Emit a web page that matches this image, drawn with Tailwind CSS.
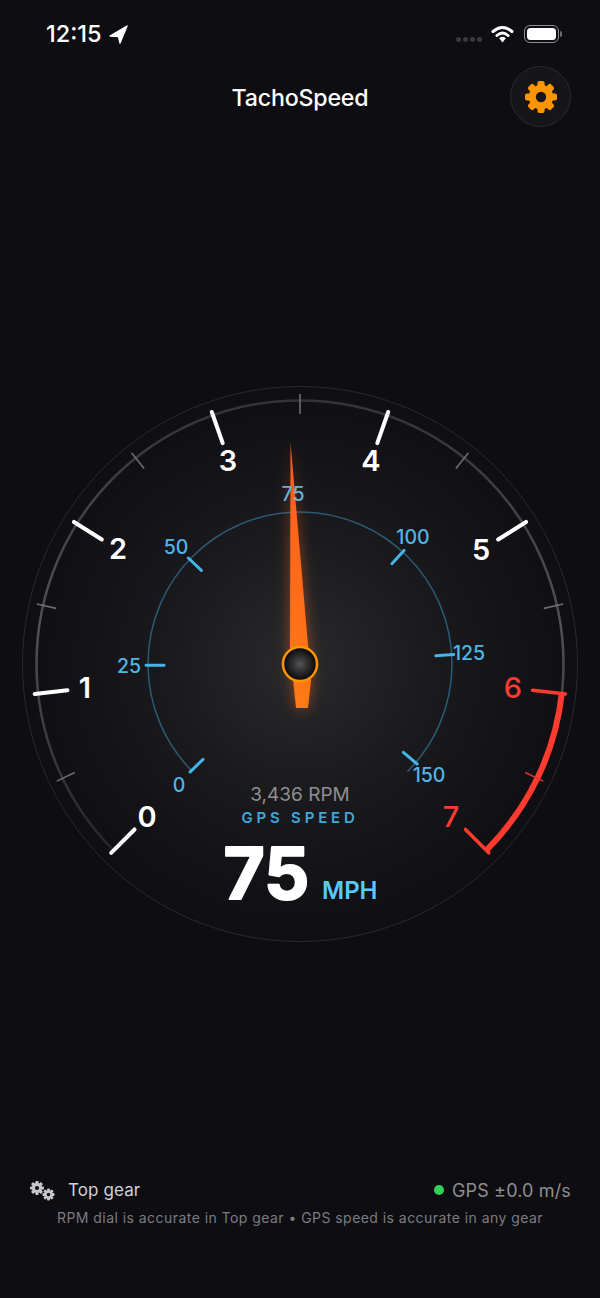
<!DOCTYPE html>
<html lang="en">
<head>
    <meta charset="UTF-8">
    <meta name="viewport" content="width=device-width, initial-scale=1.0">
    <title>TachoSpeed</title>
    <script src="https://cdn.jsdelivr.net/npm/@tailwindcss/browser@4"></script>
</head>
<body class="bg-[#0d0d12]">
    <div class="flex flex-col h-[1298px] w-[600px] overflow-hidden font-[Inter,sans-serif] text-white">

        <!-- status bar -->
        <div class="flex justify-between items-start h-[66px] pl-[46px] pr-[38px] pt-[20px]">
            <div class="flex items-center gap-[7px]">
                <span class="text-[23.5px] leading-[28px] font-medium">12:15</span>
                <svg width="19" height="19" viewBox="0 0 19 19"><path d="M18 1 L1 11 L9.5 11.5 L11 18 Z" class="fill-white stroke-white stroke-[1.4]" stroke-linejoin="round"/></svg>
            </div>
            <div class="flex items-start gap-[9px] pt-[5px]">
                <div class="flex gap-[2px] pt-[12px]">
                    <span class="w-[5px] h-[5px] rounded-full bg-[#3a3a3c]"></span>
                    <span class="w-[5px] h-[5px] rounded-full bg-[#3a3a3c]"></span>
                    <span class="w-[5px] h-[5px] rounded-full bg-[#3a3a3c]"></span>
                    <span class="w-[5px] h-[5px] rounded-full bg-[#3a3a3c]"></span>
                </div>
                <svg width="23" height="18" viewBox="0 0 23 18" class="mr-[1px]">
                    <path d="M2 6.5 Q11.5 -1.5 21 6.5" class="fill-none stroke-white stroke-[3]" stroke-linecap="round"/>
                    <path d="M6 10.5 Q11.5 5.5 17 10.5" class="fill-none stroke-white stroke-[3]" stroke-linecap="round"/>
                    <path d="M8.2 13.2 Q11.5 10.4 14.8 13.2 L11.5 17.6 Z" class="fill-white"/>
                </svg>
                <div class="flex items-center">
                    <div class="w-[35px] h-[18px] rounded-[6px] border border-[#8e8e93] p-[2px]">
                        <div class="w-full h-full rounded-[3.5px] bg-white"></div>
                    </div>
                    <div class="w-[2px] h-[6px] ml-[1px] rounded-r-sm bg-[#6e6e73]"></div>
                </div>
            </div>
        </div>

        <!-- title row -->
        <div class="grid grid-cols-[1fr_auto_1fr] items-center h-[61px] px-[29px]">
            <div></div>
            <h1 class="mt-[3px] text-[23.2px] font-medium tracking-[-0.2px]">TachoSpeed</h1>
            <div class="flex justify-end">
                <button class="flex items-center justify-center w-[61px] h-[61px] rounded-full bg-[#16161a] border border-[#2a2a2e]">
                    <svg width="34" height="34" viewBox="-17 -17 34 34" class="fill-[#ff9500] stroke-[#ff9500]">
                        <circle r="8.7" fill="none" stroke-width="7"/>
                        <g stroke="none">
                            <rect x="-3.6" y="-16" width="7.2" height="8" rx="2"/>
                            <rect x="-3.6" y="-16" width="7.2" height="8" rx="2" transform="rotate(45)"/>
                            <rect x="-3.6" y="-16" width="7.2" height="8" rx="2" transform="rotate(90)"/>
                            <rect x="-3.6" y="-16" width="7.2" height="8" rx="2" transform="rotate(135)"/>
                            <rect x="-3.6" y="-16" width="7.2" height="8" rx="2" transform="rotate(180)"/>
                            <rect x="-3.6" y="-16" width="7.2" height="8" rx="2" transform="rotate(225)"/>
                            <rect x="-3.6" y="-16" width="7.2" height="8" rx="2" transform="rotate(270)"/>
                            <rect x="-3.6" y="-16" width="7.2" height="8" rx="2" transform="rotate(315)"/>
                        </g>
                    </svg>
                </button>
            </div>
        </div>

        <!-- dial, coordinates in the viewBox are page pixels -->
        <svg width="600" height="566" viewBox="0 380 600 566" class="mt-[253px] shrink-0">
            <defs>
                <radialGradient id="dialBg" cx="300" cy="664" r="278" gradientUnits="userSpaceOnUse">
                    <stop offset="0" stop-color="#2a2a2c"/>
                    <stop offset="0.45" stop-color="#1b1b1e"/>
                    <stop offset="1" stop-color="#0e0e13"/>
                </radialGradient>
                <linearGradient id="ringStroke" x1="0" y1="400" x2="0" y2="852" gradientUnits="userSpaceOnUse">
                    <stop offset="0" stop-color="#343436"/>
                    <stop offset="0.5" stop-color="#515153"/>
                    <stop offset="1" stop-color="#262629"/>
                </linearGradient>
                <linearGradient id="needleFill" x1="0" y1="443" x2="0" y2="708" gradientUnits="userSpaceOnUse">
                    <stop offset="0" stop-color="#ff5a1e"/>
                    <stop offset="1" stop-color="#ff7a14"/>
                </linearGradient>
                <radialGradient id="hubFill" cx="300" cy="664" r="16" gradientUnits="userSpaceOnUse">
                    <stop offset="0" stop-color="#555556"/>
                    <stop offset="0.55" stop-color="#2a2a2c"/>
                    <stop offset="1" stop-color="#0a0a0c"/>
                </radialGradient>
            </defs>

            <circle cx="300" cy="664" r="277.5" fill="url(#dialBg)" class="stroke-[#2a2a2e]" stroke-width="1"/>
            <path d="M113.7 850.3 A263.5 263.5 0 1 1 486.3 850.3" fill="none" stroke="url(#ringStroke)" stroke-width="2.5"/>
            <path d="M561.8 693.5 A263.5 263.5 0 0 1 486.3 850.3" fill="none" class="stroke-[#ff3b30]" stroke-width="6"/>

            <!-- minor rpm ticks -->
            <g class="stroke-[#6e6e70]" stroke-width="1.6">
                <line x1="300" y1="394" x2="300" y2="414" transform="rotate(0 300 664)"/>
                <line x1="300" y1="394" x2="300" y2="414" transform="rotate(-38.57 300 664)"/>
                <line x1="300" y1="394" x2="300" y2="414" transform="rotate(-77.14 300 664)"/>
                <line x1="300" y1="394" x2="300" y2="414" transform="rotate(-115.71 300 664)"/>
                <line x1="300" y1="394" x2="300" y2="414" transform="rotate(38.57 300 664)"/>
                <line x1="300" y1="394" x2="300" y2="414" transform="rotate(77.14 300 664)"/>
                <line x1="300" y1="394" x2="300" y2="414" transform="rotate(115.71 300 664)" class="stroke-[#d8352b]"/>
            </g>

            <!-- major rpm ticks -->
            <g class="stroke-white" stroke-width="4" stroke-linecap="round">
                <line x1="300" y1="397" x2="300" y2="430" transform="rotate(-135 300 664)"/>
                <line x1="300" y1="397" x2="300" y2="430" transform="rotate(-96.43 300 664)"/>
                <line x1="300" y1="397" x2="300" y2="430" transform="rotate(-57.86 300 664)"/>
                <line x1="300" y1="397" x2="300" y2="430" transform="rotate(-19.29 300 664)"/>
                <line x1="300" y1="397" x2="300" y2="430" transform="rotate(19.29 300 664)"/>
                <line x1="300" y1="397" x2="300" y2="430" transform="rotate(57.86 300 664)"/>
            </g>
            <g class="stroke-[#ff3b30]" stroke-width="3.5" stroke-linecap="round">
                <line x1="300" y1="397" x2="300" y2="430" transform="rotate(96.43 300 664)"/>
                <line x1="300" y1="397" x2="300" y2="430" transform="rotate(135 300 664)"/>
            </g>

            <!-- rpm numbers -->
            <g class="fill-white text-[29px] font-semibold" text-anchor="middle">
                <text x="147" y="827">0</text>
                <text x="85" y="698">1</text>
                <text x="118" y="559">2</text>
                <text x="228" y="471">3</text>
                <text x="371" y="471">4</text>
                <text x="481" y="560">5</text>
            </g>
            <g class="fill-[#ff3b30] text-[29px] font-medium" text-anchor="middle">
                <text x="513" y="698">6</text>
                <text x="451" y="827">7</text>
            </g>

            <!-- speed scale -->
            <path d="M192.5 771.5 A152 152 0 1 1 407.5 771.5" fill="none" class="stroke-[#2c5a72]" stroke-width="1.5"/>
            <g class="stroke-[#45b4e6]" stroke-width="3" stroke-linecap="round">
                <line x1="300" y1="510" x2="300" y2="528" transform="rotate(-134.5 300 664)"/>
                <line x1="300" y1="510" x2="300" y2="528" transform="rotate(-90.5 300 664)"/>
                <line x1="300" y1="510" x2="300" y2="528" transform="rotate(-46.5 300 664)"/>
                <line x1="300" y1="510" x2="300" y2="528" transform="rotate(42.5 300 664)"/>
                <line x1="300" y1="510" x2="300" y2="528" transform="rotate(86.5 300 664)"/>
                <line x1="300" y1="510" x2="300" y2="528" transform="rotate(130.5 300 664)"/>
            </g>

            <!-- needle -->
            <polygon points="290.5,442 311,680 308,708 296,708 290,650" fill="url(#needleFill)" class="drop-shadow-[0_0_7px_rgba(255,107,26,0.5)]"/>

            <g class="fill-[#4fb6e6] text-[19.5px] font-medium" text-anchor="middle">
                <text x="179" y="792">0</text>
                <text x="129" y="673">25</text>
                <text x="176" y="554">50</text>
                <text x="293" y="501" class="fill-[#62b4dc]">75</text>
                <text x="413" y="544">100</text>
                <text x="469" y="660">125</text>
                <text x="429" y="782">150</text>
            </g>

            <!-- hub -->
            <circle cx="300" cy="664" r="17" fill="url(#hubFill)" class="stroke-[#ff9500]" stroke-width="2.5"/>

            <!-- readout -->
            <g text-anchor="middle">
                <text x="300" y="801" class="fill-[#8e8e93] text-[19px]">3,436 RPM</text>
                <text x="300" y="823" class="fill-[#3fa9dc] text-[15px] font-semibold tracking-[3.8px]">GPS SPEED</text>
                <text x="266.5" y="899" class="fill-white stroke-white text-[71px] font-bold" stroke-width="2" stroke-linejoin="round">75</text>
            </g>
            <text x="322" y="899" class="fill-[#5ac8fa] text-[24px] font-semibold">MPH</text>
        </svg>

        <!-- footer -->
        <div class="mt-[235px] px-[29px]">
            <div class="flex justify-between items-center h-[20px]">
                <div class="flex items-center gap-[13px]">
                    <svg width="26" height="20" viewBox="0 0 26 20" class="fill-[#c7c7cc] stroke-[#c7c7cc]">
                        <g transform="translate(8 7)">
                            <circle r="3.6" fill="none" stroke-width="3"/>
                            <g stroke="none">
                                <rect x="-1.6" y="-7" width="3.2" height="4" rx="0.8"/>
                                <rect x="-1.6" y="-7" width="3.2" height="4" rx="0.8" transform="rotate(45)"/>
                                <rect x="-1.6" y="-7" width="3.2" height="4" rx="0.8" transform="rotate(90)"/>
                                <rect x="-1.6" y="-7" width="3.2" height="4" rx="0.8" transform="rotate(135)"/>
                                <rect x="-1.6" y="-7" width="3.2" height="4" rx="0.8" transform="rotate(180)"/>
                                <rect x="-1.6" y="-7" width="3.2" height="4" rx="0.8" transform="rotate(225)"/>
                                <rect x="-1.6" y="-7" width="3.2" height="4" rx="0.8" transform="rotate(270)"/>
                                <rect x="-1.6" y="-7" width="3.2" height="4" rx="0.8" transform="rotate(315)"/>
                            </g>
                        </g>
                        <g transform="translate(19.5 13.5)">
                            <circle r="3" fill="none" stroke-width="2.6"/>
                            <g stroke="none">
                                <rect x="-1.4" y="-6" width="2.8" height="3.4" rx="0.7"/>
                                <rect x="-1.4" y="-6" width="2.8" height="3.4" rx="0.7" transform="rotate(45)"/>
                                <rect x="-1.4" y="-6" width="2.8" height="3.4" rx="0.7" transform="rotate(90)"/>
                                <rect x="-1.4" y="-6" width="2.8" height="3.4" rx="0.7" transform="rotate(135)"/>
                                <rect x="-1.4" y="-6" width="2.8" height="3.4" rx="0.7" transform="rotate(180)"/>
                                <rect x="-1.4" y="-6" width="2.8" height="3.4" rx="0.7" transform="rotate(225)"/>
                                <rect x="-1.4" y="-6" width="2.8" height="3.4" rx="0.7" transform="rotate(270)"/>
                                <rect x="-1.4" y="-6" width="2.8" height="3.4" rx="0.7" transform="rotate(315)"/>
                            </g>
                        </g>
                    </svg>
                    <span class="text-[17px] text-[#d1d1d6] tracking-[0.1px]">Top gear</span>
                </div>
                <div class="flex items-center gap-[8px] -mt-[2px]">
                    <span class="w-[10px] h-[10px] rounded-full bg-[#30d158]"></span>
                    <span class="text-[18px] text-[#8e8e93] tracking-[0.15px]">GPS ±0.0 m/s</span>
                </div>
            </div>
            <p class="mt-[8px] text-center text-[14px] leading-[18px] text-[#7c7c80] tracking-[0.45px]">RPM dial is accurate in Top gear • GPS speed is accurate in any gear</p>
        </div>
    </div>
</body>
</html>
